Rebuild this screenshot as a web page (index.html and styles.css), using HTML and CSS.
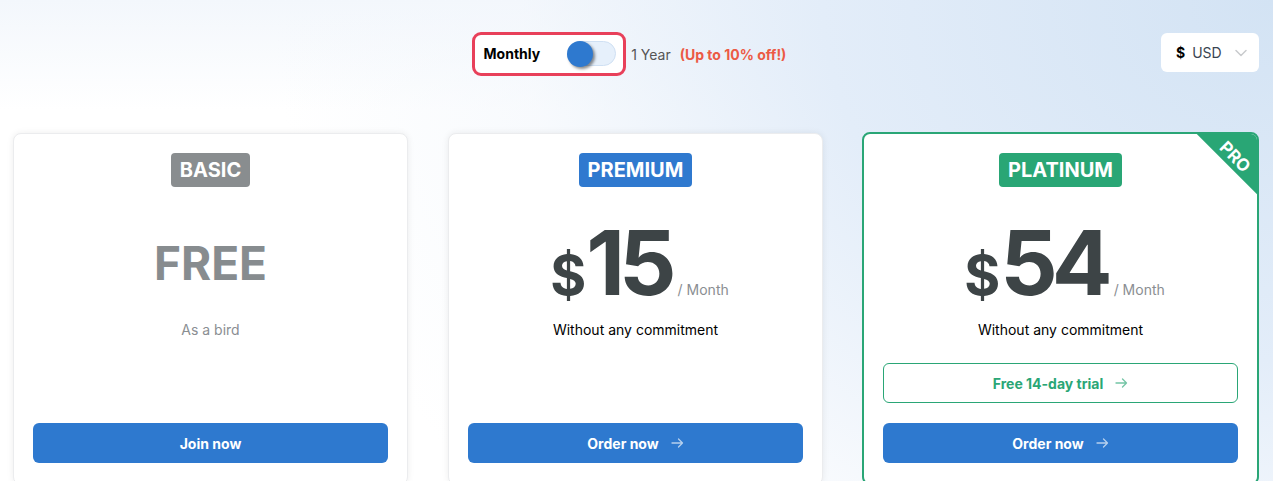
FILE: index.html
```html
<!DOCTYPE html>
<html lang="en">
<head>
<meta charset="utf-8">
<title>Pricing</title>
<link rel="stylesheet" href="styles.css">
</head>
<body>
<div class="page">
  <header class="topbar">
    <div class="spacer"></div>
    <div class="billing">
      <div class="toggle-box">
        <span class="toggle-label">Monthly</span>
        <span class="switch"><span class="knob"></span></span>
      </div>
      <span class="year">1 Year</span>
      <span class="off">(Up to 10% off!)</span>
    </div>
    <div class="currency-wrap">
      <div class="currency">
        <span class="cur-sym">$</span>
        <span class="cur-code">USD</span>
        <svg class="chev" width="12" height="8" viewBox="0 0 12 8"><path d="M1 1.5 L6 6.5 L11 1.5" fill="none" stroke="#c9cbcd" stroke-width="1.5" stroke-linecap="round" stroke-linejoin="round"/></svg>
      </div>
    </div>
  </header>

  <main class="plans">
    <section class="card card-basic">
      <div class="badge badge-gray">BASIC</div>
      <div class="price price-free"><span class="free">FREE</span></div>
      <p class="desc desc-muted">As a bird</p>
      <div class="actions">
        <a class="btn btn-primary">Join now</a>
      </div>
    </section>

    <section class="card card-premium">
      <div class="badge badge-blue">PREMIUM</div>
      <div class="price">
        <span class="cur">$</span><span class="amount">15</span><span class="per">/ Month</span>
      </div>
      <p class="desc">Without any commitment</p>
      <div class="actions">
        <a class="btn btn-primary">Order now
          <svg class="arrow" width="13" height="10" viewBox="0 0 13 10"><path d="M1 5 H11.5 M7.5 1 L11.5 5 L7.5 9" fill="none" stroke="currentColor" stroke-width="1.3" stroke-linecap="round" stroke-linejoin="round"/></svg>
        </a>
      </div>
    </section>

    <section class="card card-platinum">
      <div class="ribbon"><span>PRO</span></div>
      <div class="badge badge-green">PLATINUM</div>
      <div class="price">
        <span class="cur">$</span><span class="amount">54</span><span class="per">/ Month</span>
      </div>
      <p class="desc">Without any commitment</p>
      <div class="actions">
        <a class="btn btn-outline">Free 14-day trial
          <svg class="arrow" width="13" height="10" viewBox="0 0 13 10"><path d="M1 5 H11.5 M7.5 1 L11.5 5 L7.5 9" fill="none" stroke="currentColor" stroke-width="1.3" stroke-linecap="round" stroke-linejoin="round"/></svg>
        </a>
        <a class="btn btn-primary">Order now
          <svg class="arrow" width="13" height="10" viewBox="0 0 13 10"><path d="M1 5 H11.5 M7.5 1 L11.5 5 L7.5 9" fill="none" stroke="currentColor" stroke-width="1.3" stroke-linecap="round" stroke-linejoin="round"/></svg>
        </a>
      </div>
    </section>
  </main>
</div>
</body>
</html>
```

FILE: styles.css
```css
* { box-sizing: border-box; }

html, body {
  margin: 0;
  padding: 0;
  height: 100%;
}

body {
  font-family: Inter, "Noto Sans", "Liberation Sans", sans-serif;
  color: #111;
  background:
    radial-gradient(1000px 800px at 100% 0%, #d3e3f4 0%, #e3edf9 45%, rgba(243, 247, 252, 0.6) 75%, rgba(255, 255, 255, 0) 100%),
    linear-gradient(to bottom, #f3f7fc 0, #ffffff 110px);
  overflow: hidden;
}

.page {
  padding: 32px 14px 0 13px;
}

/* ---------- top bar ---------- */
.topbar {
  display: grid;
  grid-template-columns: 1fr auto 1fr;
  align-items: start;
  height: 44px;
}

.billing {
  display: flex;
  align-items: center;
  margin-right: 14px;
}

.toggle-box {
  display: flex;
  align-items: center;
  height: 44px;
  padding: 0 7px 2px 9px;
  border: 3px solid #e8405a;
  border-radius: 9px;
  background: #fff;
}

.toggle-label {
  font-size: 14px;
  font-weight: 700;
  color: #000;
}

.switch {
  position: relative;
  display: block;
  width: 49px;
  height: 25px;
  margin-left: 27px;
  border: 1px solid #cfe0f3;
  border-radius: 13px;
  background: #e6f0fb;
}

.knob {
  position: absolute;
  left: -1px;
  top: -1px;
  width: 26px;
  height: 26px;
  border-radius: 50%;
  background: #2e79cf;
  box-shadow: 2px 2px 3px rgba(0, 0, 0, 0.45);
}

.year {
  margin-left: 5px;
  font-size: 14px;
  color: #555;
}

.off {
  margin-left: 9px;
  font-size: 14px;
  font-weight: 700;
  color: #ec5a45;
}

.currency-wrap {
  display: flex;
  justify-content: flex-end;
  padding-top: 1px;
}

.currency {
  display: flex;
  align-items: center;
  width: 98px;
  height: 39px;
  padding: 0 12px 0 15px;
  border-radius: 6px;
  background: #fff;
}

.cur-sym {
  font-size: 14px;
  font-weight: 700;
  color: #000;
}

.cur-code {
  margin-left: 7px;
  font-size: 14px;
  color: #3a4552;
}

.chev {
  margin-left: auto;
}

/* ---------- plan cards ---------- */
.plans {
  display: flex;
  gap: 40px;
  margin-top: 57px;
  align-items: stretch;
}

.card {
  position: relative;
  display: flex;
  flex-direction: column;
  align-items: center;
  padding: 19px 19px 21px;
  border: 1px solid #ebecee;
  border-radius: 8px;
  background: #fff;
  box-shadow: 0 0 7px rgba(0, 0, 0, 0.07);
  overflow: hidden;
}

.card-basic { width: 395px; }
.card-premium { width: 375px; }
.card-platinum {
  width: 397px;
  margin-top: -1px;
  margin-left: -1px;
  padding-bottom: 20px;
  border: 2px solid #2aa676;
  box-shadow: none;
}

.badge {
  height: 34px;
  padding: 0 9px;
  border-radius: 4px;
  font-size: 20px;
  font-weight: 700;
  line-height: 34px;
  color: #fff;
}

.badge-gray { background: #898d8f; }
.badge-blue { background: #2f79cf; }
.badge-green { background: #29a675; }

.price {
  display: flex;
  align-items: baseline;
  justify-content: center;
  height: 90px;
  margin-top: 31px;
  padding-left: 8px;
  color: #3d4446;
  line-height: 1;
}

.price-free {
  align-items: center;
  padding-left: 0;
}

.free {
  font-size: 46px;
  font-weight: 700;
  color: #878c8f;
}

.cur {
  font-size: 55px;
  font-weight: 700;
  margin-right: 0;
}

.amount {
  font-size: 90px;
  font-weight: 700;
  letter-spacing: -6px;
}

.per {
  margin-left: 7px;
  font-size: 14px;
  color: #8a8e92;
}

.desc {
  margin: 12px 0 0;
  font-size: 14px;
  line-height: 20px;
  color: #000;
}

.desc-muted {
  color: #8a8e92;
}

.actions {
  display: flex;
  flex-direction: column;
  gap: 20px;
  width: 100%;
  margin-top: auto;
  padding-top: 23px;
}

.btn {
  display: flex;
  align-items: center;
  justify-content: center;
  gap: 12px;
  height: 40px;
  border-radius: 6px;
  font-size: 14px;
  font-weight: 700;
  cursor: pointer;
}

.btn-primary {
  background: #2e79cf;
  color: #fff;
}

.btn-outline {
  border: 1px solid #2aa676;
  color: #2aa676;
  background: #fff;
}

.arrow {
  opacity: 0.65;
}

/* ---------- PRO ribbon ---------- */
.ribbon {
  position: absolute;
  top: -24px;
  right: -93px;
  width: 200px;
  height: 64px;
  display: flex;
  align-items: flex-end;
  justify-content: center;
  background: #29a675;
  transform: rotate(45deg);
}

.ribbon span {
  font-size: 17px;
  font-weight: 700;
  line-height: 21px;
  color: #fff;
}
```
